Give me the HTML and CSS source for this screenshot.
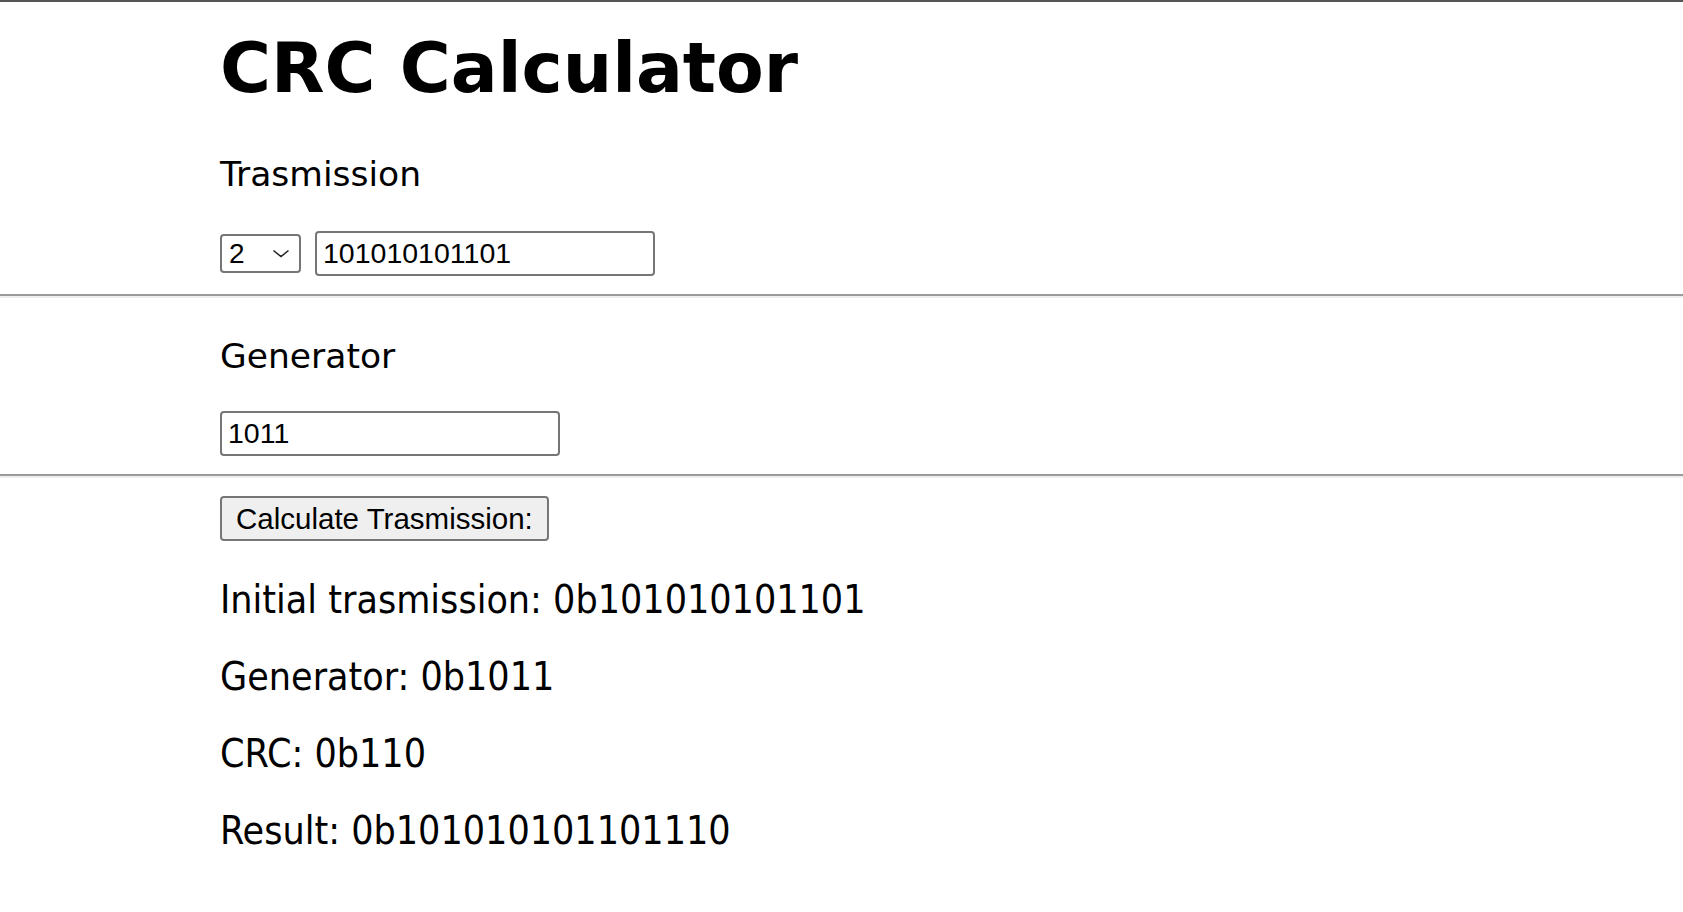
FILE: index.html
```html
<!DOCTYPE html>
<html lang="en">
<head>
<meta charset="utf-8">
<title>CRC Calculator</title>
<link rel="stylesheet" href="styles.css">
</head>
<body>
<main class="page">
  <section class="block">
    <h1 class="title">CRC Calculator</h1>
    <p class="label label-first">Trasmission</p>
    <div class="row">
      <span class="select-wrap">
        <select class="base-select">
          <option>2</option>
          <option>8</option>
          <option>10</option>
          <option>16</option>
        </select>
        <svg class="chevron" width="18" height="9" viewBox="0 0 18 9" aria-hidden="true">
          <path d="M1.5 1.5 L9 7.5 L16.5 1.5" fill="none" stroke="#222" stroke-width="1.6"/>
        </svg>
      </span>
      <input class="field" type="text" value="101010101101">
    </div>
  </section>
  <hr class="rule">
  <section class="block">
    <p class="label">Generator</p>
    <div class="row">
      <input class="field" type="text" value="1011">
    </div>
  </section>
  <hr class="rule">
  <section class="block">
    <button class="calc-btn" type="button">Calculate Trasmission:</button>
    <div class="results">
      <p class="result">Initial trasmission: 0b101010101101</p>
      <p class="result">Generator: 0b1011</p>
      <p class="result">CRC: 0b110</p>
      <p class="result">Result: 0b101010101101110</p>
    </div>
  </section>
</main>
</body>
</html>
```
FILE: styles.css
```css
html, body {
  margin: 0;
  padding: 0;
  background: #ffffff;
}

body {
  border-top: 2px solid #555555;
  font-family: "DejaVu Sans", Verdana, sans-serif;
  color: #000000;
}

.page {
  display: flex;
  flex-direction: column;
}

.block {
  padding-left: 220px;
  display: flex;
  flex-direction: column;
  align-items: flex-start;
}

.title {
  margin: 26px 0 0 0;
  font-family: "DejaVu Sans", Verdana, sans-serif;
  font-weight: 700;
  font-size: 69.5px;
  line-height: 80px;
}

.label {
  margin: 38px 0 0 0;
  font-size: 34.5px;
  line-height: 40px;
}

.label-first {
  margin-top: 46px;
}

.row {
  margin-top: 35px;
  display: flex;
  align-items: center;
  gap: 14px;
}

.block:first-child .row {
  margin-top: 37px;
}

.select-wrap {
  position: relative;
  display: inline-flex;
}

.base-select {
  -webkit-appearance: none;
  appearance: none;
  box-sizing: border-box;
  width: 81px;
  height: 39px;
  margin: 0;
  padding: 0 0 0 7px;
  border: 2px solid #767676;
  border-radius: 4px;
  background: #ffffff;
  color: #000000;
  font-family: "Liberation Sans", Arial, sans-serif;
  font-size: 28px;
}

.chevron {
  position: absolute;
  right: 11px;
  top: 15px;
  pointer-events: none;
}

.field {
  box-sizing: border-box;
  width: 340px;
  height: 45px;
  margin: 0;
  padding: 0 4px 0 6px;
  border: 2px solid #767676;
  border-radius: 4px;
  background: #ffffff;
  color: #000000;
  font-family: "Liberation Sans", Arial, sans-serif;
  font-size: 28.5px;
}

.rule {
  margin: 18px 0 0 0;
  height: 0;
  border: none;
  border-top: 2px solid #9a9a9a;
  border-bottom: 2px solid #eeeeee;
}

.calc-btn {
  margin-top: 18px;
  box-sizing: border-box;
  width: 329px;
  height: 45px;
  padding: 0 12px 0 14px;
  border: 2px solid #767676;
  border-radius: 4px;
  background: #efefef;
  color: #000000;
  font-family: "Liberation Sans", Arial, sans-serif;
  font-size: 29.5px;
  text-align: left;
}

.results {
  margin-top: 4px;
  display: flex;
  flex-direction: column;
}

.result {
  margin: 33px 0 0 0;
  font-family: "DejaVu Sans Condensed", "DejaVu Sans", sans-serif;
  font-stretch: condensed;
  font-size: 39px;
  line-height: 44px;
}
```
